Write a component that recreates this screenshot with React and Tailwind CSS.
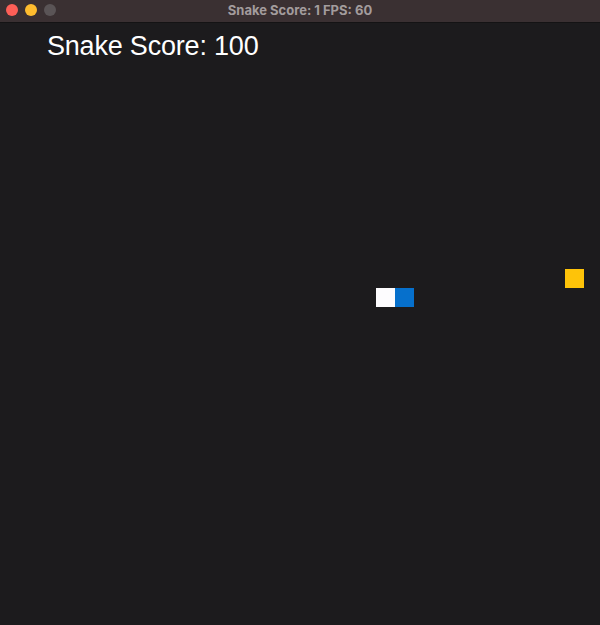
export default function App() {
  return (
    <div className="w-[600px] h-[625px] flex flex-col bg-[#1c1b1d] overflow-hidden" style={{ fontFamily: '"Liberation Sans", Arial, sans-serif' }}>
      <div className="relative h-[23px] shrink-0 bg-[#3a3032] border-b border-[#141314] flex items-center justify-center">
        <div className="absolute left-[6px] top-[4px] flex gap-[7px]">
          <div className="w-[12px] h-[12px] rounded-full bg-[#fe5f57]" />
          <div className="w-[12px] h-[12px] rounded-full bg-[#febc2e]" />
          <div className="w-[12px] h-[12px] rounded-full bg-[#5a5456]" />
        </div>
        <span className="text-[13px] font-bold text-[#a39c9d]" style={{ fontFamily: 'Inter, "Liberation Sans", sans-serif' }}>Snake Score: 1 FPS: 60</span>
      </div>
      <div className="relative flex-1">
        <div className="absolute left-[47px] top-[10px] text-[27px] leading-none tracking-[-0.2px] text-white">Snake Score: 100</div>
        <div className="absolute left-[376px] top-[265px] w-[19px] h-[19px] bg-[#fdfcfe]" />
        <div className="absolute left-[395px] top-[265px] w-[19px] h-[19px] bg-[#0670cc]" />
        <div className="absolute left-[565px] top-[246px] w-[19px] h-[19px] bg-[#fec309]" />
      </div>
    </div>
  );
}
